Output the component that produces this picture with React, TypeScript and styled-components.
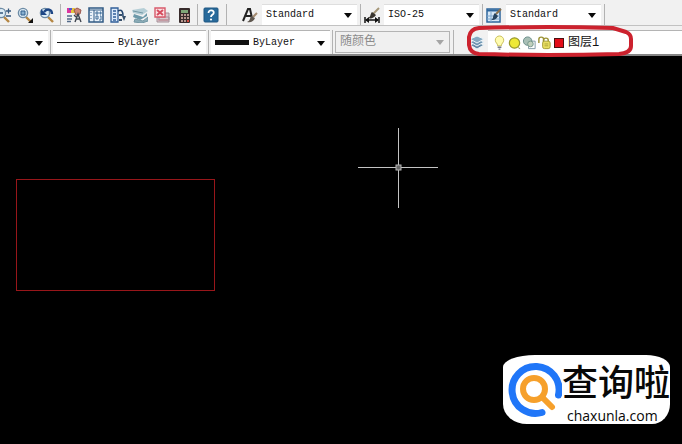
import React from "react";
import styled, { createGlobalStyle } from "styled-components";

const GlobalStyle = createGlobalStyle`
  * { box-sizing: border-box; }
  html, body { margin: 0; background: #000; }
  body { font-family: "Liberation Mono", "Noto Sans CJK SC", monospace; }
`;

const Window = styled.div`
  display: flex;
  flex-direction: column;
  min-height: 100vh;
  overflow: hidden;
`;

const Toolbar = styled.div`
  display: flex;
  align-items: stretch;
  height: 26px;
  padding-top: 4px;
  background: #f1f1f1;
  border-bottom: 1px solid #c2c2c2;
`;

const PropertiesBar = styled(Toolbar)`
  height: 30px;
  border-bottom: 2px solid #858585;
`;

const IconGroup = styled.div<{ $clipped?: boolean }>`
  display: flex;
  align-items: center;
  gap: 6px;
  margin-left: ${(p) => (p.$clipped ? "-5px" : "0")};
`;

const IconButton = styled.button`
  width: 16px;
  height: 18px;
  padding: 0;
  border: 0;
  background: none;
  flex: none;
  svg { display: block; }
`;

const Divider = styled.span<{ $gap?: number }>`
  flex: none;
  width: 1px;
  margin: 0 ${(p) => p.$gap ?? 4}px;
  background: #b2b2b2;
`;

const StyleFields = styled.div`
  display: flex;
  margin-left: 8px;
`;

const StyleField = styled.div`
  display: flex;
  align-items: center;
  gap: 4px;
  flex: none;
`;

const Combo = styled.div<{ $width?: number; $disabled?: boolean; $framed?: boolean }>`
  position: relative;
  display: flex;
  align-items: center;
  gap: 4px;
  align-self: stretch;
  ${(p) => (p.$width ? `flex: none; width: ${p.$width}px;` : "flex: 1;")}
  padding-left: 4px;
  background: ${(p) => (p.$disabled ? "#f0f0f0" : "#fff")};
  border-top: 1px solid ${(p) => (p.$framed ? "#b4b4b4" : "#dedede")};
  ${(p) => p.$disabled && "border: 1px solid #b4b4b4; margin: 1px 0;"}
`;

const Select = styled.select<{ $chinese?: boolean }>`
  appearance: none;
  flex: 1;
  min-width: 0;
  height: 18px;
  padding: 0;
  border: 0;
  background: transparent;
  color: #111;
  font-family: inherit;
  font-size: ${(p) => (p.$chinese ? 12 : 10)}px;
  line-height: 18px;
  &:disabled { color: #8b8b8b; opacity: 1; }
`;

const Arrow = styled.svg`
  position: absolute;
  right: 5px;
  top: 50%;
  margin-top: -2px;
  pointer-events: none;
`;

const LineSample = styled.span<{ $long?: boolean }>`
  flex: none;
  width: ${(p) => (p.$long ? 57 : 34)}px;
  height: ${(p) => (p.$long ? 1 : 5)}px;
  background: #111;
`;

const LayerField = styled.div`
  position: relative;
  display: flex;
  align-items: center;
  gap: 3px;
  flex: 1;
  padding-left: 12px;
`;

const LayerMarks = styled.span`
  display: flex;
  align-items: center;
  flex: none;
  svg { width: 15px; }
`;

const Highlight = styled.svg`
  position: absolute;
  left: 10px;
  top: -6px;
  z-index: 2;
  pointer-events: none;
`;

const Canvas = styled.main`
  position: relative;
  flex: 1;
  background: #000;
`;

const Drawing = styled.svg`
  display: block;
  position: absolute;
  inset: 0;
  width: 100%;
  height: 100%;
`;

const Brand = styled.a`
  position: absolute;
  right: 12px;
  bottom: 20px;
  display: flex;
  align-items: center;
  padding-left: 3px;
  height: 69px;
  background: #fff;
  border-radius: 32px 24px 18px 24px / 12px 12px 20px 20px;
  color: #080808;
  text-decoration: none;
`;

const BrandText = styled.span`
  display: flex;
  flex-direction: column;
  padding-top: 4px;
`;

const BrandName = styled.span`
  font: 500 36px/48px "Liberation Sans", "Noto Sans CJK SC", sans-serif;
`;

const BrandDomain = styled.span`
  padding-left: 5px;
  font: 500 14px/16px "Open Sans", sans-serif;
`;

const Icon = ({ children }: { children: React.ReactNode }) => (
  <svg width="16" height="16" viewBox="0 0 16 16" fill="none" aria-hidden="true">
    {children}
  </svg>
);

const Lens = ({ children }: { children?: React.ReactNode }) => (
  <Icon>
    <path d="M9 10l5 5" stroke="#b58643" strokeWidth="2.4" />
    <circle cx="6" cy="6" r="4.6" fill="#dcecf6" stroke="#6d8ba5" strokeWidth="1.4" />
    {children}
  </Icon>
);

const ZoomRealtime = () => (
  <Lens>
    <path d="M4 6h4M11 4h5M13.500 1.500v5M11 9h5" stroke="#34577d" strokeWidth="1.300" />
  </Lens>
);

const ZoomWindow = () => (
  <Lens>
    <path d="M4 4h4v4H4z" fill="#87afcf" stroke="#315f8c" />
    <path d="M16 11v5h-5z" fill="#111" />
  </Lens>
);

const ZoomPrevious = () => (
  <Lens>
    <path d="M13 7c0-5-5-6-8-2" stroke="#1d4685" strokeWidth="2.400" />
    <path d="M2 2v6h6z" fill="#1d4685" />
  </Lens>
);

const PropertiesIcon = () => (
  <Icon>
    <path d="M1 1h4v5H1z" fill="#dc37a0" />
    <path d="M5 1h4v5H5z" fill="#e5c33c" />
    <path d="M3 1h3v2H3z" fill="#4c5dd0" />
    <path d="M8 3l3-2 4 2-1 4-4 1z" fill="#cf8875" stroke="#9a5750" />
    <path d="M1 9h5M1 12h5M1 14.500h4" stroke="#536a89" strokeWidth="1.400" />
    <path d="M8 8l2 2M9 15l3-8 3 8M10 12h4" stroke="#3f4550" strokeWidth="1.400" />
  </Icon>
);

const DesignCenter = () => (
  <Icon>
    <rect x="1" y="1" width="14" height="14" fill="#e9f2fa" stroke="#315a84" strokeWidth="1.500" />
    <path d="M1 3h14M6 3v12" stroke="#315a84" />
    <path d="M3 5v1M3 8v1M3 11v1M8 5h2v2H8zM12 5h1v2h-1zM8 9h2v3H8zM12 9h1v4h-2" stroke="#3f6d98" />
  </Icon>
);

const ToolPalettes = () => (
  <Icon>
    <path d="M1 1h7v14H1z" fill="#dceafa" stroke="#315f99" strokeWidth="1.300" />
    <path d="M3 4h3M3 7h3M3 10h3M3 13h3" stroke="#315f99" strokeWidth="1.500" />
    <path d="M8 4c4-2 5 1 5 5" stroke="#24466f" strokeWidth="1.500" />
    <path d="M9 7h3v2H9zM9 12h3v2H9zM12 9l2 5 2-5z" fill="#38516c" />
  </Icon>
);

const SheetSet = () => (
  <Icon>
    <path d="M0 3l12-2 4 3-6 4-9-2z" fill="#b5ced6" />
    <path d="M2 7l9 3 4-4v3l-7 4-7-3z" fill="#6d99a9" />
    <path d="M3 12l8 2 5-4v4l-6 2-8-1zM1 4l10 2" fill="#8cacb7" stroke="#7397a4" />
  </Icon>
);

const Markup = () => (
  <Icon>
    <path d="M5 6h10v7H5zM3 10h12v5H3z" fill="#d9c9cf" stroke="#a78f98" />
    <path d="M1 1h10v9H1z" fill="#fbe2e4" stroke="#d85a6b" strokeWidth="1.400" />
    <path d="M3 3l6 5M9 3L3 8" stroke="#d54d5f" strokeWidth="2" />
    <path d="M4 13h10" stroke="#c98a94" />
  </Icon>
);

const Calculator = () => (
  <Icon>
    <rect x="3" y="1" width="11" height="15" rx="1" fill="#382b2b" />
    <path d="M5 3h7v3H5z" fill="#80a678" />
    <path d="M5 8h2M8 8h2M11 8h2M5 11h2M8 11h2M11 11h2M5 14h2M8 14h2" stroke="#dfbbb0" strokeWidth="1.500" />
    <path d="M11 14h2" stroke="#d24b3e" strokeWidth="2" />
  </Icon>
);

const Help = () => (
  <Icon>
    <rect x="1" y="1" width="14" height="14" rx="1" fill="#286a9b" stroke="#1f5682" />
    <path d="M5.500 6c0-4 6-3 5.200 0C10.200 8 8 7.700 8 10" stroke="#fff" strokeWidth="1.800" />
    <circle cx="8" cy="12.500" r="1.100" fill="#fff" />
  </Icon>
);

const TextStyle = () => (
  <Icon>
    <path d="M1 14L6 2h2l2 9M4 9h6" stroke="#222" strokeWidth="2" />
    <path d="M15 6l-4 4" stroke="#a48b70" strokeWidth="2" />
    <path d="M9 9l4 2c-1 3-4 5-8 4 3-1 3-4 4-6z" fill="#5f574f" />
  </Icon>
);

const DimStyle = () => (
  <Icon>
    <path d="M1 10v6M15 10v6M2 13h12" stroke="#111" strokeWidth="1.500" />
    <path d="M1 13l4-3v6zM15 13l-4-3v6z" fill="#111" />
    <path d="M15 1L9 7" stroke="#a59778" strokeWidth="2" />
    <path d="M8 5l4 3c-2 3-5 4-8 3 3-1 2-4 4-6z" fill="#39352f" />
  </Icon>
);

const TableStyle = () => (
  <Icon>
    <rect x="1" y="2" width="13" height="13" fill="#d7e8f7" stroke="#2e669c" strokeWidth="1.500" />
    <path d="M1 3.500h13" stroke="#2e669c" strokeWidth="2" />
    <path d="M5 5v10M1 9h13M1 12h13" stroke="#7ba5cc" />
    <path d="M15 2l-5 5" stroke="#8a7250" strokeWidth="2" />
    <path d="M9 6l3 3c-2 4-4 4-7 4 3-1 1-4 4-7z" fill="#26435e" />
  </Icon>
);

const LayerStack = () => (
  <Icon>
    <path d="M1 11l7-3 7 3-7 4z" fill="#6489a6" stroke="#eef5f9" />
    <path d="M1 8l7-3 7 3-7 4z" fill="#6f95b1" stroke="#eef5f9" />
    <path d="M1 5l7-3 7 3-7 4z" fill="#85a9c1" stroke="#eef5f9" />
  </Icon>
);

const Bulb = () => (
  <Icon>
    <path d="M6 11C6 8 3.500 8 3.500 5a4.500 4.500 0 019 0c0 3-2.500 3-2.500 6z" fill="#fffcb0" stroke="#c6bc54" />
    <path d="M6 12.500h4M7 14.500h2" stroke="#777b87" strokeWidth="1.500" />
  </Icon>
);

const Sun = () => (
  <Icon>
    <circle cx="8" cy="8" r="5.500" fill="#eee936" stroke="#97972c" strokeWidth="1.300" />
    <path d="M12 13l2 1" stroke="#868632" />
  </Icon>
);

const ViewportFreeze = () => (
  <Icon>
    <path d="M7 6h7v8H7z" fill="#fff" stroke="#7e98a4" />
    <circle cx="6" cy="6" r="4.500" fill="#a8bfb6" stroke="#698c89" />
    <circle cx="9" cy="9" r="3" fill="#c1d0bd" stroke="#75978b" />
  </Icon>
);

const Lock = () => (
  <Icon>
    <path d="M2 8V4c0-3 5-3 5 0v3" stroke="#999032" strokeWidth="1.500" />
    <path d="M7 7V5c0-3 5-3 5 0v2" stroke="#999032" strokeWidth="1.500" />
    <rect x="6" y="6" width="8" height="8" rx="2" fill="#e9df62" stroke="#a39c35" />
    <path d="M8 9h4M8 11h4" stroke="#b0a53c" />
  </Icon>
);

const Swatch = styled.span`
  width: 10px;
  height: 10px;
  margin-left: 2px;
  border: 1px solid #4c1111;
  background: #e30c18;
`;

type ComboBoxProps = {
  name: string;
  value?: string;
  width?: number;
  disabled?: boolean;
  chinese?: boolean;
  framed?: boolean;
  arrow?: boolean;
  children?: React.ReactNode;
};

const ComboBox = ({ name, value = "", width, disabled, chinese, framed, arrow = true, children }: ComboBoxProps) => (
  <Combo $width={width} $disabled={disabled} $framed={framed}>
    {children}
    <Select aria-label={name} disabled={disabled} $chinese={chinese} defaultValue={value}>
      <option value={value}>{value}</option>
    </Select>
    {arrow && (
      <Arrow width="8" height="5" viewBox="0 0 8 5" aria-hidden="true">
        <path d="M0 0h8L4 5z" fill={disabled ? "#a5a5a5" : "#080808"} />
      </Arrow>
    )}
  </Combo>
);

const zoomTools = [
  { label: "Zoom Realtime", Art: ZoomRealtime },
  { label: "Zoom Window", Art: ZoomWindow },
  { label: "Zoom Previous", Art: ZoomPrevious },
];

const paletteTools = [
  { label: "Properties", Art: PropertiesIcon },
  { label: "DesignCenter", Art: DesignCenter },
  { label: "Tool Palettes", Art: ToolPalettes },
  { label: "Sheet Set Manager", Art: SheetSet },
  { label: "Markup Set Manager", Art: Markup },
  { label: "QuickCalc", Art: Calculator },
];

const helpTools = [{ label: "Help", Art: Help }];

const styleFields = [
  { label: "Text Style", value: "Standard", Art: TextStyle },
  { label: "Dimension Style", value: "ISO-25", Art: DimStyle },
  { label: "Table Style", value: "Standard", Art: TableStyle },
];

const Tools = ({ items, clipped }: { items: typeof zoomTools; clipped?: boolean }) => (
  <IconGroup $clipped={clipped}>
    {items.map(({ label, Art }) => (
      <IconButton key={label} aria-label={label}><Art /></IconButton>
    ))}
  </IconGroup>
);

export default function App() {
  return (
    <Window>
      <GlobalStyle />
      <Toolbar>
        <Tools items={zoomTools} clipped />
        <Divider $gap={5} />
        <Tools items={paletteTools} />
        <Divider $gap={5} />
        <Tools items={helpTools} />
        <Divider $gap={7} />
        <StyleFields>
          {styleFields.map(({ label, value, Art }) => (
            <React.Fragment key={label}>
              <StyleField>
                <IconButton aria-label={`${label} Manager`}><Art /></IconButton>
                <ComboBox name={label} value={value} width={95} />
              </StyleField>
              <Divider $gap={3} />
            </React.Fragment>
          ))}
        </StyleFields>
      </Toolbar>
      <PropertiesBar>
        <ComboBox name="Color" width={48} framed />
        <Divider $gap={2} />
        <ComboBox name="Linetype" value="ByLayer" width={153} framed><LineSample $long /></ComboBox>
        <Divider $gap={2} />
        <ComboBox name="Lineweight" value="ByLayer" width={119} framed><LineSample /></ComboBox>
        <Divider $gap={2} />
        <ComboBox name="Plot Style" value="随颜色" width={115} disabled chinese />
        <Divider $gap={3} />
        <LayerField>
          <LayerStack />
          <ComboBox name="Layer" value="图层1" chinese framed arrow={false}>
            <LayerMarks><Bulb /><Sun /><ViewportFreeze /><Lock /><Swatch /></LayerMarks>
          </ComboBox>
          <Highlight width="168" height="34" viewBox="0 0 168 34" fill="none" aria-hidden="true">
            <path d="M12 4C50 3 112 3 146 4L159 8Q164 10 164 15V22Q164 29 152 30C112 31 50 31 12 30Q3 29 2 21V13Q3 5 12 4Z" stroke="#cc222e" strokeWidth="4" />
          </Highlight>
        </LayerField>
      </PropertiesBar>
      <Canvas>
        <Drawing aria-label="Model space">
          <rect x="16.5" y="123.5" width="198" height="111" fill="none" stroke="#98161a" />
          <path d="M358 111.500h80M398.500 72v80" stroke="#c4c4c4" />
          <rect x="396" y="109" width="5" height="5" fill="#666" stroke="#b5b5b5" />
        </Drawing>
        <Brand href="#chaxunla">
          <svg width="56" height="60" viewBox="0 0 56 60" fill="none" aria-hidden="true">
            <path d="M36 52.500A23.500 23.500 0 1 1 52.500 35" stroke="#2076f8" strokeWidth="7" strokeLinecap="round" />
            <circle cx="28" cy="29" r="11" stroke="#f6a02b" strokeWidth="6" />
            <path d="M36 37l10 10" stroke="#f6a02b" strokeWidth="6" strokeLinecap="round" />
          </svg>
          <BrandText>
            <BrandName>查询啦</BrandName>
            <BrandDomain>chaxunla.com</BrandDomain>
          </BrandText>
        </Brand>
      </Canvas>
    </Window>
  );
}
